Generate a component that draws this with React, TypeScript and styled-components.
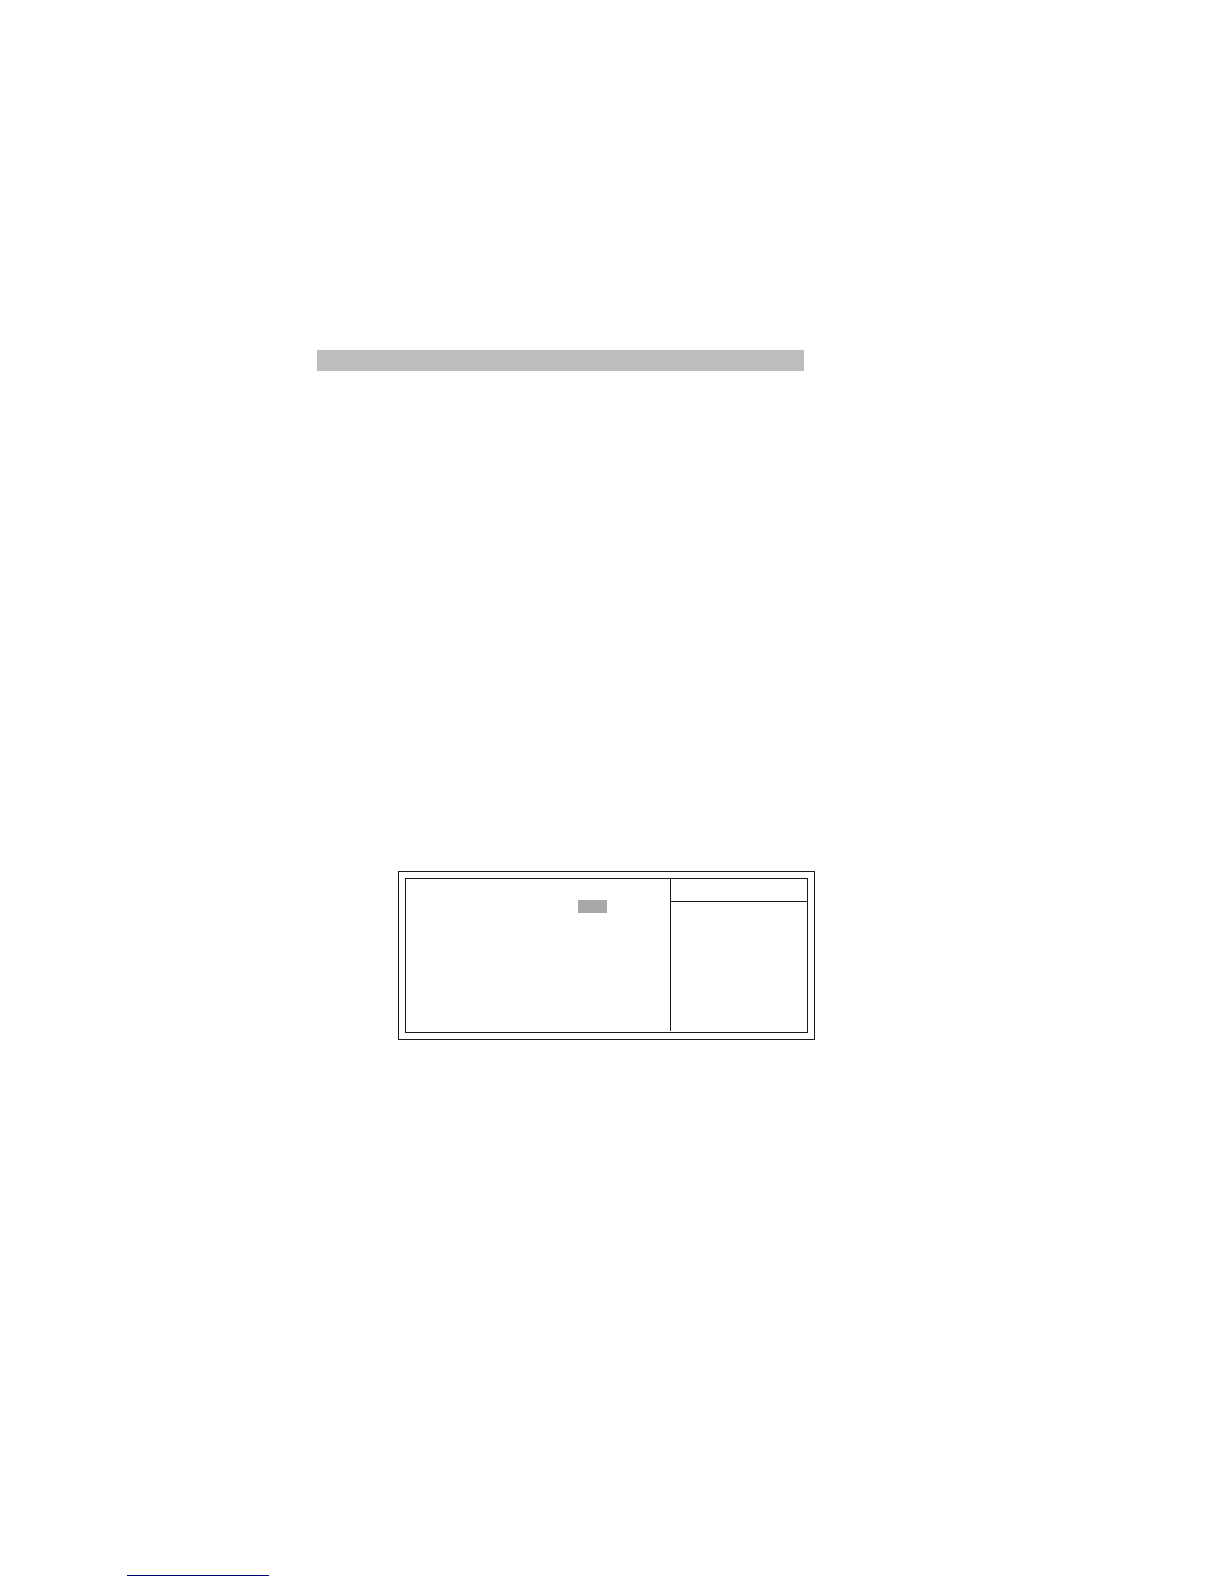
import React from "react";
import styled, { createGlobalStyle } from "styled-components";

const ink = "#1c1c1e";

const GlobalStyle = createGlobalStyle`
  *, *::before, *::after { box-sizing: border-box; }
  body {
    margin: 0;
    background: #fff;
    font-family: "Liberation Sans", Arial, sans-serif;
  }
`;

const Page = styled.div`
  display: flex;
  flex-direction: column;
  padding: 350px 127px 8px;
`;

const Article = styled.main`
  display: flex;
  flex-direction: column;
  gap: 500px;
  padding-left: 190px;
`;

const HeadingBar = styled.header`
  width: 100%;
  max-width: 487px;
  height: 21px;
  background: #bdbdbd;
`;

const SetupFrame = styled.section`
  width: 100%;
  max-width: 417px;
  margin-left: 81px;
  padding: 6px;
  border: 1px solid ${ink};
`;

const SetupScreen = styled.div`
  display: grid;
  grid-template-columns: minmax(0, 1fr) 137px;
  min-height: 155px;
  border: 1px solid ${ink};
`;

const OptionsPane = styled.div`
  padding: 21px 0 0 172px;
`;

const SelectedValue = styled.div`
  width: 29px;
  height: 13px;
  background: #a8a8a8;
`;

const HelpPane = styled.aside`
  margin-bottom: 1px;
  border-left: 1px solid ${ink};
`;

const HelpHeader = styled.div`
  height: 23px;
  border-bottom: 1px solid ${ink};
`;

const Footer = styled.footer`
  display: flex;
  padding-top: 535px;
`;

const FooterLink = styled.a`
  width: 142px;
  border-bottom: 1px solid #00007c;
`;

export default function App() {
  return (
    <>
      <GlobalStyle />
      <Page>
        <Article>
          <HeadingBar />
          <SetupFrame>
            <SetupScreen>
              <OptionsPane>
                <SelectedValue />
              </OptionsPane>
              <HelpPane>
                <HelpHeader />
              </HelpPane>
            </SetupScreen>
          </SetupFrame>
        </Article>
        <Footer>
          <FooterLink href="#" />
        </Footer>
      </Page>
    </>
  );
}
